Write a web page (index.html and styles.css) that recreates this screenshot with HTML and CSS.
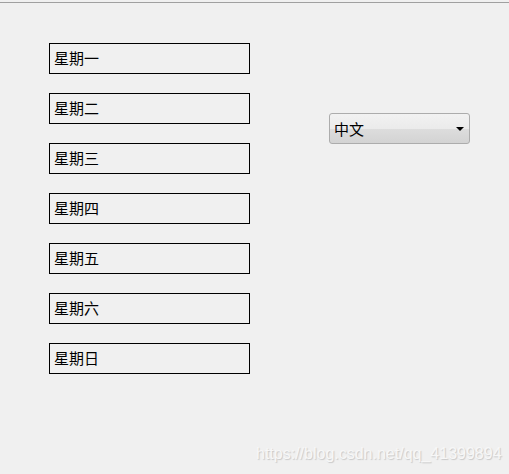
FILE: index.html
```html
<!DOCTYPE html>
<html>
<head>
<meta charset="utf-8">
<link rel="stylesheet" href="styles.css">
</head>
<body>
<div class="topline"></div>
<div class="main">
  <div class="fields">
    <div class="field">星期一</div>
    <div class="field">星期二</div>
    <div class="field">星期三</div>
    <div class="field">星期四</div>
    <div class="field">星期五</div>
    <div class="field">星期六</div>
    <div class="field">星期日</div>
  </div>
  <div class="combo">
    <span class="combo-text">中文</span>
    <span class="arrow"></span>
  </div>
</div>
<div class="watermark">https://blog.csdn.net/qq_41399894</div>
</body>
</html>
```

FILE: styles.css
```css
html, body {
  margin: 0;
  padding: 0;
  background: #f0f0f0;
  width: 509px;
  height: 474px;
  overflow: hidden;
  position: relative;
  font-family: "Noto Sans CJK SC", "Liberation Sans", sans-serif;
}
.topline {
  height: 2px;
  border-bottom: 1px solid #a0a0a0;
}
.main {
  display: flex;
  padding-left: 49px;
  padding-top: 40px;
  gap: 79px;
}
.fields {
  display: flex;
  flex-direction: column;
  gap: 19px;
}
.field {
  box-sizing: border-box;
  width: 201px;
  height: 31px;
  border: 1px solid #000;
  padding-left: 4px;
  font-size: 15px;
  line-height: 28px;
  color: #000;
}
.combo {
  box-sizing: border-box;
  margin-top: 70px;
  width: 141px;
  height: 31px;
  border: 1px solid #acacac;
  border-radius: 3px;
  background: linear-gradient(#f2f2f2 0%, #ebebeb 50%, #dddddd 51%, #d3d3d3 100%);
  display: flex;
  align-items: center;
  justify-content: space-between;
  padding-left: 4px;
  padding-right: 5px;
}
.combo-text {
  font-size: 15px;
  line-height: 28px;
  color: #000;
}
.arrow {
  width: 0;
  height: 0;
  border-left: 4px solid transparent;
  border-right: 4px solid transparent;
  border-top: 4px solid #000;
}
.watermark {
  position: absolute;
  left: 256px;
  top: 445px;
  font-family: "Liberation Sans", Arial, sans-serif;
  font-size: 16px;
  line-height: 18px;
  color: #f7f7f7;
  text-shadow: 1px 1px 1px #c8c8c8;
}
```
